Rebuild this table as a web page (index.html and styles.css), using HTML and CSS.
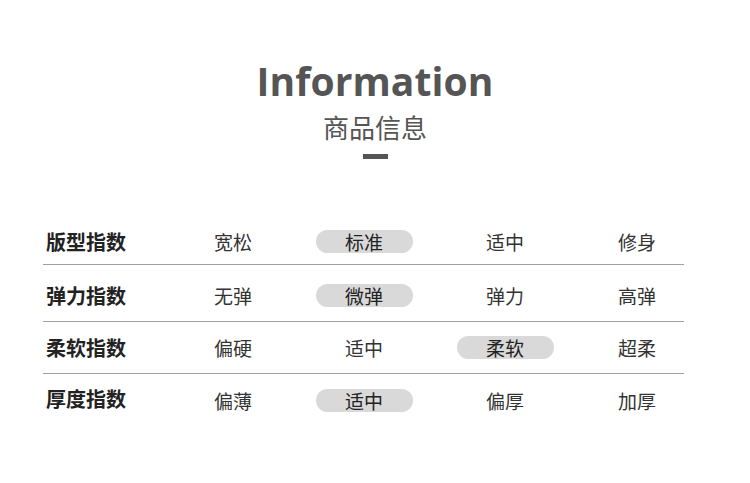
FILE: index.html
```html
<!DOCTYPE html>
<html lang="zh-CN">
<head>
<meta charset="utf-8">
<link rel="stylesheet" href="styles.css">
</head>
<body>
<div class="page">
  <header class="head">
    <h1 class="title">Information</h1>
    <div class="subtitle">商品信息</div>
    <div class="bar"></div>
  </header>
  <div class="table">
    <div class="row row-1">
      <div class="label">版型指数</div>
      <div class="cell">宽松</div>
      <div class="cell"><span class="pill">标准</span></div>
      <div class="cell">适中</div>
      <div class="cell last">修身</div>
    </div>
    <div class="row row-2">
      <div class="label">弹力指数</div>
      <div class="cell">无弹</div>
      <div class="cell"><span class="pill">微弹</span></div>
      <div class="cell">弹力</div>
      <div class="cell last">高弹</div>
    </div>
    <div class="row row-3">
      <div class="label">柔软指数</div>
      <div class="cell">偏硬</div>
      <div class="cell">适中</div>
      <div class="cell"><span class="pill">柔软</span></div>
      <div class="cell last">超柔</div>
    </div>
    <div class="row row-4">
      <div class="label">厚度指数</div>
      <div class="cell">偏薄</div>
      <div class="cell"><span class="pill">适中</span></div>
      <div class="cell">偏厚</div>
      <div class="cell last">加厚</div>
    </div>
  </div>
</div>
</body>
</html>
```
FILE: styles.css
```css
html, body {
  margin: 0;
  padding: 0;
  background: #ffffff;
}
.page {
  width: 750px;
  height: 483px;
  overflow: hidden;
  font-family: "Noto Sans CJK SC", "Noto Sans", sans-serif;
}
.head {
  display: flex;
  flex-direction: column;
  align-items: center;
  padding-top: 59px;
}
.title {
  margin: 0;
  font-family: "Open Sans", "Noto Sans", sans-serif;
  font-weight: 700;
  font-size: 39px;
  line-height: 44px;
  color: #555555;
  letter-spacing: 0.1px;
}
.subtitle {
  margin-top: 9px;
  font-size: 26px;
  line-height: 30px;
  color: #555555;
}
.bar {
  margin-top: 12px;
  width: 25px;
  height: 5px;
  background: #555555;
}
.table {
  margin: 0 0 0 43px;
  width: 641px;
  padding-top: 58px;
}
.row {
  display: grid;
  grid-template-columns: 125px 130px 132px 150px 104px;
  align-items: center;
  height: 52px;
  box-sizing: border-box;
  border-bottom: 1.5px solid #a0a0a0;
}
.row-1 { height: 48px; padding-top: 2px; }
.row-2 { height: 57px; padding-top: 5px; }
.row-3 { height: 52px; padding-top: 1px; padding-bottom: 1px; }
.row-4 { border-bottom: none; padding-bottom: 2px; }
.label {
  padding-left: 3px;
  font-size: 20px;
  font-weight: 700;
  color: #222222;
  line-height: 24px;
}
.cell {
  text-align: center;
  font-size: 19px;
  line-height: 24px;
  color: #333333;
}
.row-4 .cell { padding-top: 4px; }
.cell.last { padding-left: 10px; }
.pill {
  display: inline-block;
  width: 97px;
  height: 23px;
  line-height: 23px;
  border-radius: 12px;
  background: #d9d9d9;
  color: #222222;
}
```
